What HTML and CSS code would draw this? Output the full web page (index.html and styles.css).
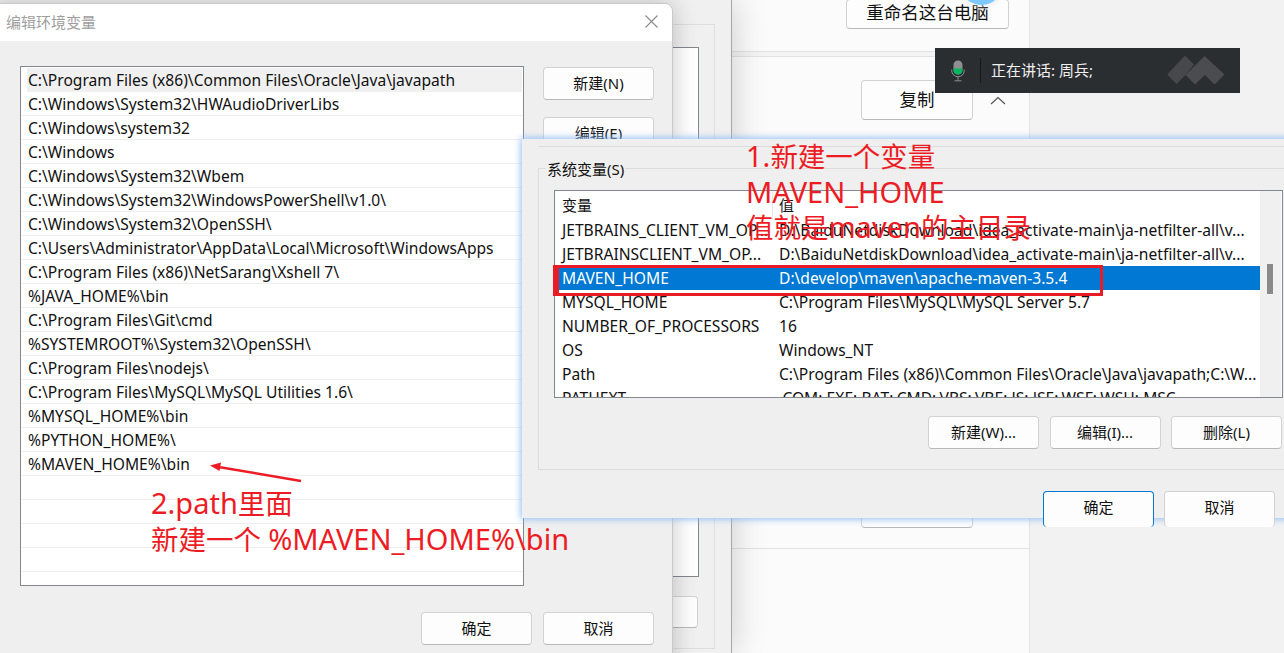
FILE: index.html
```html
<!DOCTYPE html>
<html lang="zh-CN">
<head>
<meta charset="utf-8">
<title>编辑环境变量</title>
<link rel="stylesheet" href="styles.css">
</head>
<body>
<div class="desktop">

  <section class="settings">
    <div class="card card-top"><button class="btn rename">重命名这台电脑</button></div>
    <div class="card card-mid">
      <div class="copy-row">
        <button class="btn copy">复制</button>
        <svg class="chevron" width="16" height="9" viewBox="0 0 16 9"><path d="M1 8 L8 1.5 L15 8" fill="none" stroke="#555" stroke-width="1.2"/></svg>
      </div>
      <button class="btn copy copy-lower"></button>
    </div>
    <div class="card card-end"></div>
  </section>
  <div class="avatar"></div>

  <section class="back-dialog">
    <div class="back-group">
      <div class="back-list"></div>
      <button class="btn back-btn"></button>
    </div>
  </section>

  <section class="edit-dialog">
    <header class="titlebar">
      <span class="title">编辑环境变量</span>
      <svg class="close" width="13" height="13" viewBox="0 0 13 13"><path d="M.5 .5 L12.5 12.5 M12.5 .5 L.5 12.5" stroke="#8a8a8a" stroke-width="1.1" fill="none"/></svg>
    </header>
    <div class="edit-body">
      <ul class="path-list">
        <li class="path first">C:\Program Files (x86)\Common Files\Oracle\Java\javapath</li>
        <li class="path">C:\Windows\System32\HWAudioDriverLibs</li>
        <li class="path">C:\Windows\system32</li>
        <li class="path">C:\Windows</li>
        <li class="path">C:\Windows\System32\Wbem</li>
        <li class="path">C:\Windows\System32\WindowsPowerShell\v1.0\</li>
        <li class="path">C:\Windows\System32\OpenSSH\</li>
        <li class="path">C:\Users\Administrator\AppData\Local\Microsoft\WindowsApps</li>
        <li class="path">C:\Program Files (x86)\NetSarang\Xshell 7\</li>
        <li class="path">%JAVA_HOME%\bin</li>
        <li class="path">C:\Program Files\Git\cmd</li>
        <li class="path">%SYSTEMROOT%\System32\OpenSSH\</li>
        <li class="path">C:\Program Files\nodejs\</li>
        <li class="path">C:\Program Files\MySQL\MySQL Utilities 1.6\</li>
        <li class="path">%MYSQL_HOME%\bin</li>
        <li class="path">%PYTHON_HOME%\</li>
        <li class="path">%MAVEN_HOME%\bin</li>
        <li class="path"></li>
        <li class="path"></li>
        <li class="path"></li>
        <li class="path"></li>
      </ul>
      <div class="side-buttons">
        <button class="btn">新建(N)</button>
        <button class="btn">编辑(E)</button>
      </div>
    </div>
    <footer class="edit-footer">
      <button class="btn">确定</button>
      <button class="btn">取消</button>
    </footer>
  </section>

  <section class="sys-dialog">
    <div class="sys-topline"></div>
    <div class="sys-group">
      <span class="legend">系统变量(S)</span>
      <div class="var-table">
        <div class="var-scroll"><div class="var-thumb"></div></div>
        <div class="var-row var-head"><span class="var-name head-name">变量</span><span class="var-value">值</span></div>
        <div class="var-row"><span class="var-name">JETBRAINS_CLIENT_VM_OP...</span><span class="var-value">D:\BaiduNetdiskDownload\idea_activate-main\ja-netfilter-all\v...</span></div>
        <div class="var-row"><span class="var-name">JETBRAINSCLIENT_VM_OP...</span><span class="var-value">D:\BaiduNetdiskDownload\idea_activate-main\ja-netfilter-all\v...</span></div>
        <div class="var-row selected"><span class="var-name">MAVEN_HOME</span><span class="var-value">D:\develop\maven\apache-maven-3.5.4</span></div>
        <div class="var-row"><span class="var-name">MYSQL_HOME</span><span class="var-value">C:\Program Files\MySQL\MySQL Server 5.7</span></div>
        <div class="var-row"><span class="var-name">NUMBER_OF_PROCESSORS</span><span class="var-value">16</span></div>
        <div class="var-row"><span class="var-name">OS</span><span class="var-value">Windows_NT</span></div>
        <div class="var-row"><span class="var-name">Path</span><span class="var-value">C:\Program Files (x86)\Common Files\Oracle\Java\javapath;C:\W...</span></div>
        <div class="var-row"><span class="var-name">PATHEXT</span><span class="var-value">.COM;.EXE;.BAT;.CMD;.VBS;.VBE;.JS;.JSE;.WSF;.WSH;.MSC</span></div>
      </div>
      <div class="var-actions">
        <button class="btn">新建(W)...</button>
        <button class="btn">编辑(I)...</button>
        <button class="btn">删除(L)</button>
      </div>
    </div>
    <footer class="sys-footer">
      <button class="btn primary">确定</button>
      <button class="btn">取消</button>
    </footer>
  </section>

  <div class="speaking">
    <svg class="mic" width="14" height="22" viewBox="0 0 14 22">
      <rect x="2.500" y="0.500" width="9" height="14" rx="4.500" fill="#8d8f91"/>
      <path d="M2.500 8.500 H11.500 V10 A4.500 4.500 0 0 1 2.500 10 Z" fill="#06b55f"/>
      <path d="M.7 9.500 V10.500 A6.300 6.300 0 0 0 13.300 10.500 V9.500 M7 17 V20.500 M3.500 20.800 H10.500" fill="none" stroke="#8d8f91" stroke-width="1"/>
    </svg>
    <span class="speak-divider"></span>
    <span class="speak-text">正在讲话: 周兵;</span>
    <svg class="logo" width="58" height="30" viewBox="0 0 58 30">
      <path d="M18 0.500 L27 9.500 L18.500 20 L9.500 29 L1 20.500 Q0 19.500 1 18.500 Z" fill="#46484b"/>
      <path d="M37.500 1 L56.500 18.500 Q57.500 19.500 56.500 20.500 L48.500 28.500 Q47.500 29.500 46.500 28.500 L38 20 L29 28.500 Q28 29.500 27 28.500 L18.500 20 Z" fill="#4a4c4f"/>
    </svg>
  </div>

  <div class="note note-one"><span class="latin">1.</span>新建一个变量<br><span class="latin">MAVEN_HOME</span><br>值就是<span class="latin">maven</span>的主目录</div>
  <div class="note note-two"><span class="latin">2.path</span>里面<br>新建一个 <span class="latin">%MAVEN_HOME%\bin</span></div>
  <div class="red-box"></div>
  <svg class="arrow" width="96" height="22" viewBox="0 0 96 22">
    <path d="M93 19 L12 5.200" stroke="#ed1c24" stroke-width="2.400" fill="none"/>
    <path d="M2 3.500 L13 0.500 L11.500 9 Z" fill="#ed1c24"/>
  </svg>
</div>
</body>
</html>
```
FILE: styles.css
```css
* { box-sizing: border-box; }
html, body { margin: 0; padding: 0; }
body {
  width: 1284px;
  height: 653px;
  overflow: hidden;
  font-family: "Noto Sans", "Noto Sans CJK SC", sans-serif;
  font-size: 15.600px;
  color: #111;
}
.desktop {
  position: relative;
  width: 1284px;
  height: 653px;
  overflow: hidden;
  background: #f2f2f2;
}

.btn {
  display: flex;
  align-items: center;
  justify-content: center;
  width: 111px;
  height: 33px;
  padding: 0 0 2px;
  font: inherit;
  font-size: 15px;
  color: #111;
  background: #fdfdfd;
  border: 1px solid #d2d2d2;
  border-bottom-color: #b8b8b8;
  border-radius: 4px;
}
.btn.primary { border-color: #0078d4; }

/* settings window */
.settings {
  position: absolute;
  left: 731px;
  top: 0;
  width: 299px;
  height: 653px;
  display: flex;
  flex-direction: column;
  gap: 4px;
  background: #f4f4f4;
  border-right: 1px solid #e2e2e2;
}
.card { background: #fbfbfb; }
.card-top {
  height: 52px;
  border-bottom: 1px solid #e2e2e2;
  padding: 0 0 0 115px;
}
.rename {
  position: relative;
  top: -1px;
  width: 163px;
  height: 30px;
  padding-bottom: 6px;
  font-size: 17.500px;
}
.card-mid {
  height: 493px;
  border-top: 1px solid #e2e2e2;
  border-bottom: 1px solid #e2e2e2;
  padding: 23px 0 0 130px;
  display: flex;
  flex-direction: column;
}
.copy-row {
  display: flex;
  align-items: center;
  gap: 17px;
}
.copy {
  width: 112px;
  height: 40px;
  padding-bottom: 4px;
  font-size: 17.500px;
}
.copy-lower { margin-top: 376px; height: 32px; }
.card-end { flex: 1; margin-top: -4px; }
.avatar {
  position: absolute;
  left: 960px;
  top: -38px;
  width: 43px;
  height: 43px;
  border-radius: 50%;
  background: #7cc9ff;
  box-shadow: 0 0 4px 1px rgba(255,255,255,.8), 0 1px 6px rgba(0,0,0,.12);
}

/* dialog behind */
.back-dialog {
  position: absolute;
  left: 0;
  top: 0;
  width: 732px;
  height: 653px;
  padding: 24px 16px 0 0;
  background: #f0f0f0;
  border-right: 1px solid #a6a6a6;
  box-shadow: 4px 0 30px rgba(0,0,0,.16);
}
.back-group {
  height: 625px;
  border: 1px solid #dedede;
  padding: 22px 15px 0 0;
  display: flex;
  flex-direction: column;
  align-items: flex-end;
}
.back-list {
  width: 400px;
  height: 530px;
  background: #fff;
  border: 1px solid #83878e;
}
.back-btn { margin-top: 19px; margin-right: 1px; height: 32px; }

/* edit dialog */
.edit-dialog {
  position: absolute;
  left: -10px;
  top: 3px;
  width: 683px;
  height: 670px;
  padding-left: 9px;
  background: #efefef;
  border: 1px solid #c9c9c9;
  border-radius: 8px;
  box-shadow: 0 0 24px rgba(0,0,0,.22);
  overflow: hidden;
}
.titlebar {
  display: flex;
  align-items: center;
  justify-content: space-between;
  height: 37px;
  margin-left: -9px;
  padding: 0 14px 2px 15px;
  background: #fff;
}
.title { font-size: 15px; color: #9e9e9e; }
.edit-body {
  display: flex;
  align-items: flex-start;
  padding: 25px 0 0 20px;
}
.path-list {
  width: 504px;
  height: 520px;
  margin: 0;
  padding: 1px 1px 0 1px;
  list-style: none;
  background: #fff;
  border: 1px solid #83878e;
}
.path {
  height: 24px;
  line-height: 25px;
  padding-left: 6px;
  border-bottom: 1px solid #eeeeee;
  white-space: nowrap;
}
.path.first {
  margin-left: 5px;
  padding-left: 1px;
  background: #f0f0f0;
  border-bottom-color: #f0f0f0;
}
.side-buttons {
  display: flex;
  flex-direction: column;
  gap: 17px;
  margin: 1px 0 0 19px;
}
.edit-footer {
  display: flex;
  justify-content: flex-end;
  gap: 11px;
  padding: 26px 18px 0 0;
}

/* system variable dialog */
.sys-dialog {
  position: absolute;
  left: 522px;
  top: 139px;
  width: 800px;
  height: 379px;
  padding: 7px 0 0 16px;
  background: #efefef;
  box-shadow: 0 0 7px 1px #8fbdf7;
}
.sys-topline { height: 1px; background: #dcdcdc; }
.sys-group {
  position: relative;
  height: 302px;
  margin-top: 21px;
  padding: 21px 0 0 15px;
  border: 1px solid #dcdcdc;
}
.legend {
  position: absolute;
  left: 7px;
  top: -10px;
  padding: 0 1px;
  line-height: 20px;
  font-size: 15px;
  background: #efefef;
}
.var-table {
  position: relative;
  width: 729px;
  height: 208px;
  padding: 0 22px 0 1px;
  overflow: hidden;
  background: #fff;
  border: 1px solid #83878e;
}
.var-scroll {
  position: absolute;
  right: 1px;
  top: 0;
  bottom: 0;
  width: 21px;
  background: #f0f0f0;
}
.var-thumb {
  width: 6px;
  height: 30px;
  margin: 73px 0 0 7px;
  background: #8a8a8a;
}
.var-row {
  display: grid;
  grid-template-columns: 217px 1fr;
  height: 24px;
  line-height: 25px;
  white-space: nowrap;
}
.var-head {
  height: 27px;
  line-height: 28px;
  font-size: 15px;
}
.var-name { padding-left: 6px; }
.head-name { border-right: 1px solid #e8e8e8; }
.var-value { padding-left: 6px; }
.selected {
  background: #0078d4;
  color: #fff;
}
.var-actions {
  display: flex;
  justify-content: flex-end;
  gap: 10.500px;
  width: 729px;
  margin-top: 18px;
  padding-right: 1px;
}
.sys-footer {
  display: flex;
  gap: 10px;
  padding: 21px 0 0 505px;
}
.sys-footer .btn { border-bottom-width: 0; padding-bottom: 6px; height: 36px; flex: none; }

/* speaking indicator */
.speaking {
  position: absolute;
  left: 935px;
  top: 48px;
  width: 305px;
  height: 45px;
  display: flex;
  align-items: center;
  padding-left: 16px;
  background: #2b2e31;
  color: #f0f0f0;
  font-size: 15px;
}
.mic { flex: none; margin-top: 1px; }
.speak-divider {
  width: 1px;
  height: 25px;
  margin: 0 10px 0 15px;
  background: #15171a;
}
.speak-text { flex: 1; padding-bottom: 2px; }
.logo { flex: none; margin: 0 15px 1px 0; }

/* annotations */
.note {
  position: absolute;
  color: #ed1c24;
  font-size: 27.500px;
  white-space: nowrap;
}
.latin { font-size: 29px; line-height: 1; }
.note-one { left: 746px; top: 139px; line-height: 35.500px; }
.note-two { left: 151px; top: 486px; line-height: 36px; }
.red-box {
  position: absolute;
  left: 553px;
  top: 265px;
  width: 550px;
  height: 31px;
  border: 3px solid #e81c24;
  border-left-width: 6px;
}
.arrow {
  position: absolute;
  left: 208px;
  top: 462px;
}
```
